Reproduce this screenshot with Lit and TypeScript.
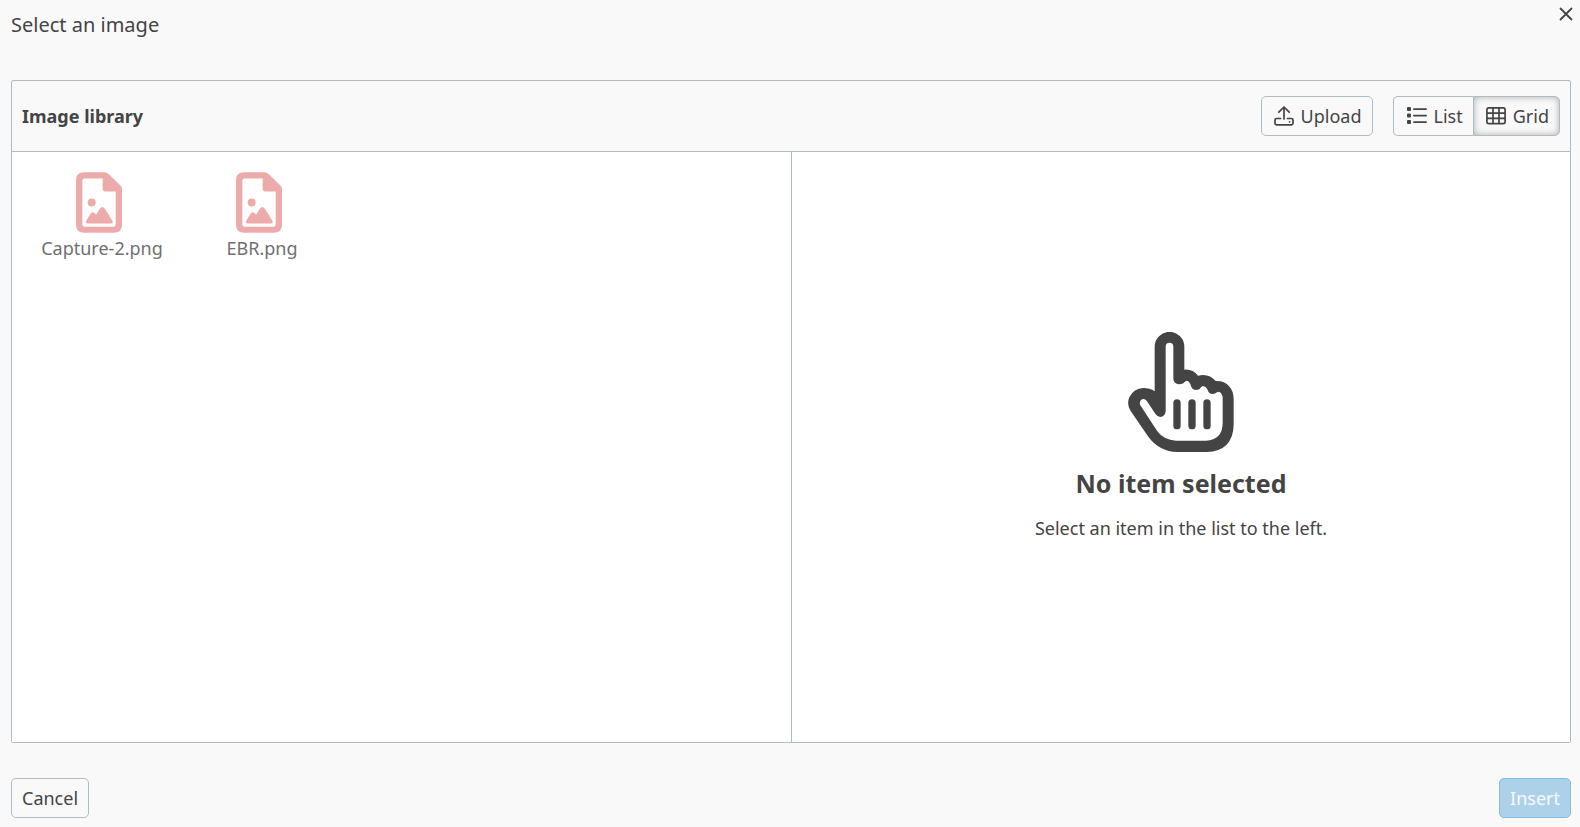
import { LitElement, html, css, svg } from "lit";
import { customElement, property, state } from "lit/decorators.js";
import { classMap } from "lit/directives/class-map.js";

const closeIcon = html`<svg class="close-icon" viewBox="0 0 14 14" aria-hidden="true">
  <path d="M1.5 1.5 12.5 12.5M12.5 1.5 1.5 12.5" />
</svg>`;

const uploadIcon = html`<svg class="icon" viewBox="0 0 20 20" aria-hidden="true">
  <g fill="none" stroke="currentColor" stroke-width="1.7" stroke-linecap="round" stroke-linejoin="round">
    <path d="M10 13V1.2M4.8 6.2 10 1l5.2 5.2" />
    <path d="M6.600 12.500H2.600a1.600 1.600 0 0 0-1.600 1.600v3.200a1.600 1.600 0 0 0 1.600 1.600h14.800a1.600 1.600 0 0 0 1.600-1.600v-3.200a1.600 1.600 0 0 0-1.600-1.600h-4" />
  </g>
  <circle cx="15.6" cy="15.8" r="0.9" fill="currentColor" />
</svg>`;

const listIcon = html`<svg class="icon" viewBox="0 0 20 20" aria-hidden="true">
  <g fill="currentColor">
    <rect x="0" y="1" width="4" height="4" rx="1" />
    <rect x="0" y="7.5" width="4" height="4" rx="1" />
    <rect x="0" y="14" width="4" height="4" rx="1" />
    <rect x="6" y="2.2" width="14" height="1.7" rx="0.8" />
    <rect x="6" y="8.7" width="14" height="1.7" rx="0.8" />
    <rect x="6" y="15.2" width="14" height="1.7" rx="0.8" />
  </g>
</svg>`;

const gridIcon = html`<svg class="icon" viewBox="0 0 20 20" aria-hidden="true">
  <g fill="none" stroke="currentColor" stroke-width="1.7">
    <rect x="0.9" y="1.9" width="18.2" height="15.7" rx="1.8" />
    <path d="M1 7.1h18M1 12.4h18M7 2v15.5M13 2v15.5" />
  </g>
</svg>`;

const fileShapes = svg`
  <path fill-rule="evenodd" d="M24 0H85Q92 0 97 5L133 40Q138 45 138 52V158Q138 182 114 182H24Q0 182 0 158V24Q0 0 24 0ZM25 19Q19 19 19 25V158Q19 164 25 164H113Q119 164 119 158V58H88Q80 58 80 49V19Z" />
  <circle cx="47" cy="91" r="12" />
  <path d="M31 145 44 124Q49 117 55 122L60 128 72 109Q79 100 86 109L108 144Q113 153 105 154H35Q27 153 31 145Z" />`;

const handIcon = html`<svg class="hand" viewBox="54 36 318 360" aria-hidden="true">
  <path
    fill-rule="evenodd"
    d="M134 80A44.500 44.500 0 0 1 223 80V149Q249 147 264 167Q297 159 317 183C350 181 371 205 371 236V314Q369 393 290 396H202Q147 394 115 350L62 273Q49 253 58 232Q71 205 100 204Q120 204 134 214ZM167 80V274Q165 290 151 291Q143 291 137 283L111 244Q104 235 96 238Q86 244 91 256L142 334Q161 360 198 362H288Q337 360 338 310V232Q336 217 325 215Q320 216 318 219Q312 222 306 222Q295 220 292 208Q288 199 279 198Q273 200 269 207Q264 210 257 210Q245 209 242 195Q238 183 230 182Q224 184 220 190Q214 193 207 193Q192 191 190 178V80A11.500 11.500 0 0 0 167 80Z"
  />
  <rect x="190" y="238" width="22" height="90" rx="11" />
  <rect x="235" y="238" width="22" height="90" rx="11" />
  <rect x="280" y="238" width="22" height="90" rx="11" />
</svg>`;

@customElement("library-item")
class LibraryItem extends LitElement {
  @property() name = "";

  static styles = css`
    :host {
      display: block;
    }
    .item {
      display: flex;
      flex-direction: column;
      align-items: center;
      width: 100%;
      padding: 0;
      border: 0;
      background: none;
      color: #707070;
      font: inherit;
      cursor: pointer;
    }
    .file {
      display: block;
      width: 46px;
      height: 61px;
      margin-right: 6px;
      fill: #edaaaa;
    }
    .name {
      line-height: 30px;
    }
  `;

  render() {
    return html`<button class="item" type="button">
      <svg class="file" viewBox="0 0 138 182" aria-hidden="true">${fileShapes}</svg>
      <span class="name">${this.name}</span>
    </button>`;
  }
}

@customElement("app-root")
class AppRoot extends LitElement {
  @state() private view: "list" | "grid" = "grid";

  private files = ["Capture-2.png", "EBR.png"];

  static styles = css`
    :host {
      display: flex;
      flex-direction: column;
      box-sizing: border-box;
      min-height: 100vh;
      padding: 0 9px 9px 11px;
      background: #f9f9f9;
      color: #444;
      font: 18px/28px "Noto Sans", sans-serif;
    }
    *,
    *::before {
      box-sizing: border-box;
    }
    .title-bar {
      display: flex;
      justify-content: space-between;
      align-items: flex-start;
      height: 80px;
    }
    .title {
      margin: 0;
      padding-top: 11px;
      font-size: 20px;
      font-weight: 400;
    }
    .close {
      display: flex;
      padding: 7px 0;
      border: 0;
      background: none;
      color: inherit;
      cursor: pointer;
    }
    .close-icon {
      width: 14px;
      height: 14px;
      margin-right: -2px;
      fill: none;
      stroke: currentColor;
      stroke-width: 1.8;
      stroke-linecap: round;
    }
    .panel {
      display: flex;
      flex: 1;
      flex-direction: column;
      border: 1px solid #adbdc7;
      border-radius: 2px;
    }
    .toolbar {
      display: flex;
      align-items: center;
      gap: 20px;
      padding: 15px 10px;
      border-bottom: 1px solid #adbdc7;
    }
    .heading {
      flex: 1;
      margin: 0;
      font-size: 18px;
      font-weight: 700;
    }
    .button {
      display: flex;
      align-items: center;
      gap: 7px;
      height: 40px;
      padding: 0 10px;
      border: 1px solid #adbdc7;
      border-radius: 5px;
      background: #f9f9f9;
      color: inherit;
      font: inherit;
      cursor: pointer;
    }
    .with-icon {
      padding-left: 12px;
    }
    .icon {
      width: 20px;
      height: 20px;
    }
    .group {
      display: flex;
    }
    .group .button:first-child {
      padding-left: 13px;
      border-right: 0;
      border-radius: 5px 0 0 5px;
    }
    .group .button:last-child {
      border-radius: 0 5px 5px 0;
    }
    .pressed {
      box-shadow: inset 0 0 7px rgba(0, 0, 0, 0.3);
    }
    .body {
      display: grid;
      flex: 1;
      grid-template-columns: 1fr 1fr;
      background: #fff;
    }
    .files {
      display: grid;
      grid-template-columns: repeat(auto-fill, 160px);
      align-content: start;
      margin: 0;
      padding: 20px 10px;
      list-style: none;
    }
    .files.as-list {
      grid-template-columns: 1fr;
    }
    .empty {
      display: flex;
      flex-direction: column;
      align-items: center;
      justify-content: center;
      padding-bottom: 20px;
      border-left: 1px solid #adbdc7;
      text-align: center;
    }
    .hand {
      width: 106px;
      height: 120px;
      fill: #444;
    }
    .empty-title {
      margin: 12px 0;
      font-size: 25px;
      font-weight: 700;
      line-height: 38px;
    }
    .empty-text {
      margin: 0;
    }
    .actions {
      display: flex;
      justify-content: space-between;
      padding-top: 35px;
    }
    .primary {
      border-color: #7fbfe5;
      background: #aed1ea;
      color: #f7fafc;
      cursor: default;
    }
  `;

  render() {
    return html`
      <header class="title-bar">
        <h1 class="title">Select an image</h1>
        <button class="close" type="button" aria-label="Close">${closeIcon}</button>
      </header>
      <section class="panel">
        <div class="toolbar">
          <h2 class="heading">Image library</h2>
          <button class="button with-icon" type="button">${uploadIcon}Upload</button>
          <div class="group" role="group">
            ${this.viewButton("list", "List", listIcon)}${this.viewButton("grid", "Grid", gridIcon)}
          </div>
        </div>
        <div class="body">
          <ul class=${classMap({ files: true, "as-list": this.view === "list" })}>
            ${this.files.map((name) => html`<li><library-item name=${name}></library-item></li>`)}
          </ul>
          <div class="empty">
            ${handIcon}
            <h3 class="empty-title">No item selected</h3>
            <p class="empty-text">Select an item in the list to the left.</p>
          </div>
        </div>
      </section>
      <footer class="actions">
        <button class="button" type="button">Cancel</button>
        <button class="button primary" type="button" disabled>Insert</button>
      </footer>
    `;
  }

  private viewButton(view: "list" | "grid", label: string, icon: unknown) {
    const pressed = this.view === view;
    return html`<button
      class=${classMap({ button: true, "with-icon": true, pressed })}
      type="button"
      aria-pressed=${pressed}
      @click=${() => (this.view = view)}
    >${icon}${label}</button>`;
  }
}
